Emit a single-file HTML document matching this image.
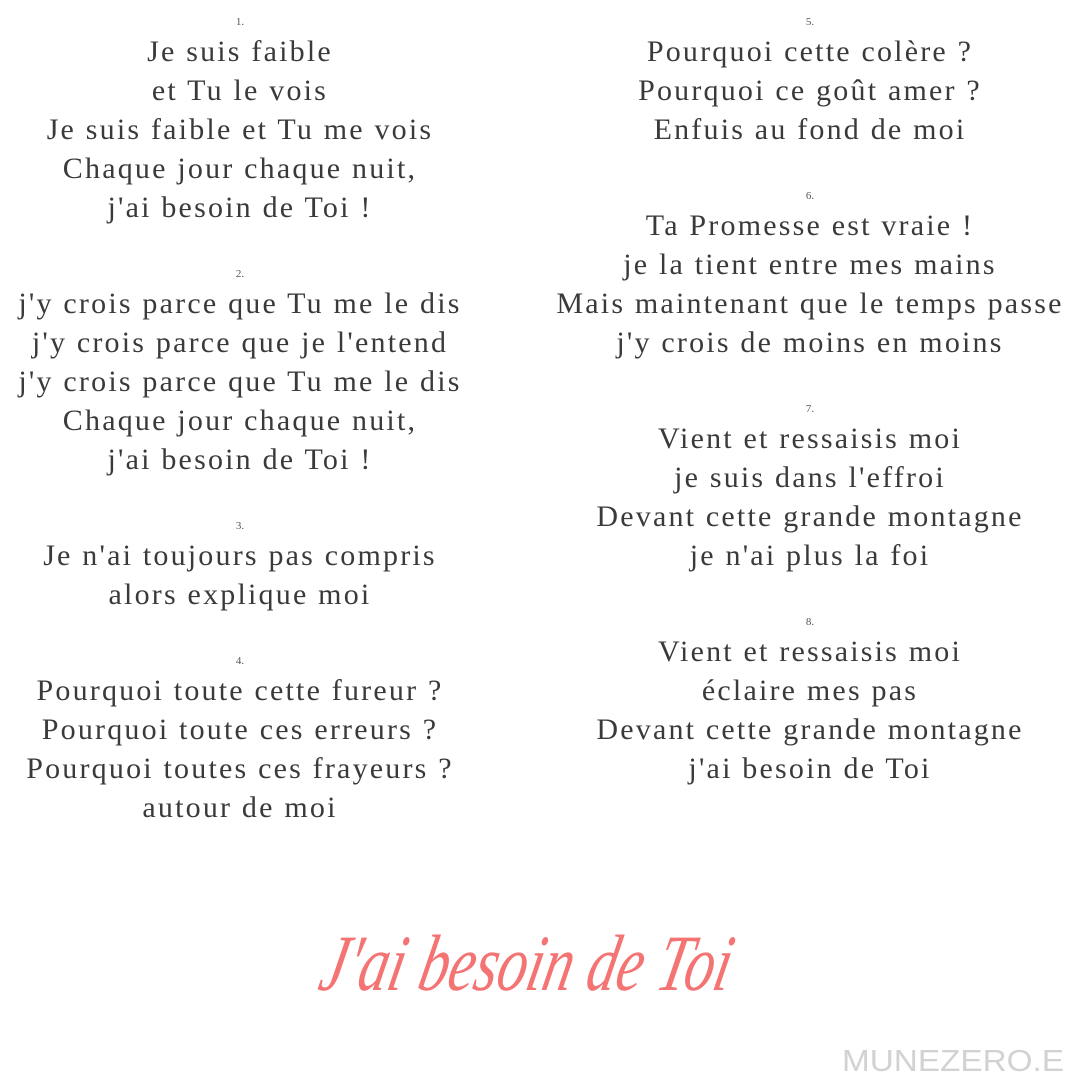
<!DOCTYPE html>
<html><head><meta charset="utf-8"><style>
html,body{margin:0;padding:0;background:#fff;}
body{width:1080px;height:1080px;position:relative;overflow:hidden;font-family:"Liberation Serif",serif;color:#3a3a3a;}
.l{position:absolute;width:700px;text-align:center;font-size:30px;line-height:39px;white-space:nowrap;letter-spacing:2.2px;}
.n{position:absolute;width:600px;text-align:center;font-size:11px;line-height:14px;color:#555;}
.l.L{left:-110px}.l.R{left:460px}
.n.L{left:-60px}.n.R{left:510px}
</style></head><body>
<div class="n L" style="top:15px">1.</div>
<div class="l L" style="top:32px">Je suis faible</div>
<div class="l L" style="top:71px">et Tu le vois</div>
<div class="l L" style="top:110px">Je suis faible et Tu me vois</div>
<div class="l L" style="top:149px">Chaque jour chaque nuit,</div>
<div class="l L" style="top:188px">j'ai besoin de Toi !</div>
<div class="n L" style="top:267px">2.</div>
<div class="l L" style="top:284px">j'y crois parce que Tu me le dis</div>
<div class="l L" style="top:323px">j'y crois parce que je l'entend</div>
<div class="l L" style="top:362px">j'y crois parce que Tu me le dis</div>
<div class="l L" style="top:401px">Chaque jour chaque nuit,</div>
<div class="l L" style="top:440px">j'ai besoin de Toi !</div>
<div class="n L" style="top:519px">3.</div>
<div class="l L" style="top:536px">Je n'ai toujours pas compris</div>
<div class="l L" style="top:575px">alors explique moi</div>
<div class="n L" style="top:654px">4.</div>
<div class="l L" style="top:671px">Pourquoi toute cette fureur ?</div>
<div class="l L" style="top:710px">Pourquoi toute ces erreurs ?</div>
<div class="l L" style="top:749px">Pourquoi toutes ces frayeurs ?</div>
<div class="l L" style="top:788px">autour de moi</div>

<div class="n R" style="top:15px">5.</div>
<div class="l R" style="top:32px">Pourquoi cette colère ?</div>
<div class="l R" style="top:71px">Pourquoi ce goût amer ?</div>
<div class="l R" style="top:110px">Enfuis au fond de moi</div>
<div class="n R" style="top:189px">6.</div>
<div class="l R" style="top:206px">Ta Promesse est vraie !</div>
<div class="l R" style="top:245px">je la tient entre mes mains</div>
<div class="l R" style="top:284px">Mais maintenant que le temps passe</div>
<div class="l R" style="top:323px">j'y crois de moins en moins</div>
<div class="n R" style="top:402px">7.</div>
<div class="l R" style="top:419px">Vient et ressaisis moi</div>
<div class="l R" style="top:458px">je suis dans l'effroi</div>
<div class="l R" style="top:497px">Devant cette grande montagne</div>
<div class="l R" style="top:536px">je n'ai plus la foi</div>
<div class="n R" style="top:615px">8.</div>
<div class="l R" style="top:632px">Vient et ressaisis moi</div>
<div class="l R" style="top:671px">éclaire mes pas</div>
<div class="l R" style="top:710px">Devant cette grande montagne</div>
<div class="l R" style="top:749px">j'ai besoin de Toi</div>

<svg style="position:absolute;left:0;top:0" width="1080" height="1080">
<text x="522" y="990" text-anchor="middle" font-family="Liberation Serif" font-style="italic" font-size="80" fill="#f25a5a" fill-opacity="0.85" transform="skewX(-12) translate(210,0)" textLength="410" lengthAdjust="spacingAndGlyphs">J'ai besoin de Toi</text>
<text x="1064" y="1071" text-anchor="end" font-family="Liberation Sans" font-size="31" fill="#d2d2d2" textLength="222" lengthAdjust="spacingAndGlyphs">MUNEZERO.E</text>
</svg>
</body></html>
